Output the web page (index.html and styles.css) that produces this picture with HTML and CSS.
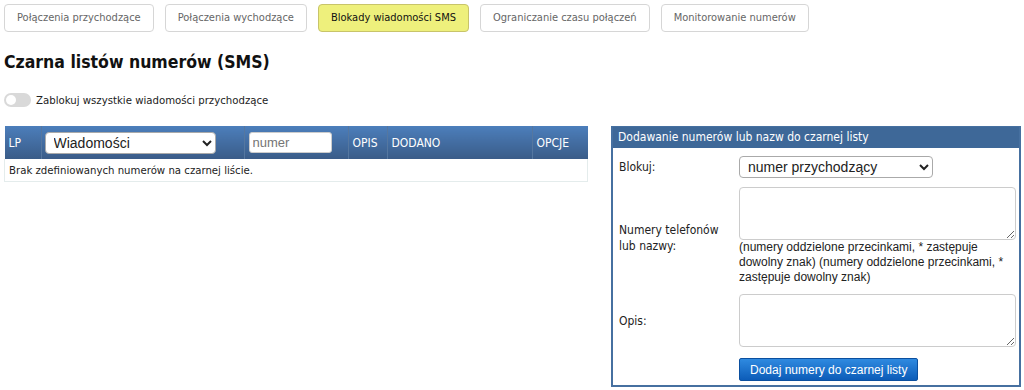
FILE: index.html
```html
<!DOCTYPE html>
<html lang="pl">
<head>
  <meta charset="UTF-8" />
  <title>Blokady wiadomości SMS</title>
  <link rel="stylesheet" href="styles.css">
</head>
<body>

  <!-- Tabs -->
  <div class="tabs">
    <a class="tab">Połączenia przychodzące</a>
    <a class="tab">Połączenia wychodzące</a>
    <a class="tab active">Blokady wiadomości SMS</a>
    <a class="tab">Ograniczanie czasu połączeń</a>
    <a class="tab">Monitorowanie numerów</a>
  </div>

  <h1>Czarna listów numerów (SMS)</h1>

  <div class="toggle-row">
    <span class="toggle"><span class="knob"></span></span>
    <span>Zablokuj wszystkie wiadomości przychodzące</span>
  </div>

  <div class="content">
    <!-- Blacklist table -->
    <table class="list">
      <thead>
        <tr>
          <th class="c-lp">LP</th>
          <th class="c-type">
            <select class="sel">
              <option>Wiadomości</option>
            </select>
          </th>
          <th class="c-num"><input type="text" class="num" placeholder="numer" /></th>
          <th class="c-opis">OPIS</th>
          <th class="c-date">DODANO</th>
          <th class="c-opt">OPCJE</th>
        </tr>
      </thead>
      <tbody>
        <tr>
          <td colspan="6">Brak zdefiniowanych numerów na czarnej liście.</td>
        </tr>
      </tbody>
    </table>

    <!-- Add form -->
    <div class="panel">
      <div class="panel-head">Dodawanie numerów lub nazw do czarnej listy</div>
      <div class="form">
        <label class="lbl">Blokuj:</label>
        <div>
          <select class="sel block-sel">
            <option>numer przychodzący</option>
          </select>
        </div>

        <label class="lbl lbl-two">Numery telefonów<br/>lub nazwy:</label>
        <div>
          <textarea class="area"></textarea>
          <div class="hint">(numery oddzielone przecinkami, * zastępuje dowolny znak) (numery oddzielone przecinkami, * zastępuje dowolny znak)</div>
        </div>

        <label class="lbl">Opis:</label>
        <div>
          <textarea class="area"></textarea>
        </div>

        <div></div>
        <div><button class="btn">Dodaj numery do czarnej listy</button></div>
      </div>
    </div>
  </div>

</body>
</html>
```

FILE: styles.css
```css
body {
  margin: 0;
  font-family: "DejaVu Sans Condensed", "DejaVu Sans", sans-serif;
  font-size: 12px;
  color: #222;
  background: #fff;
}
.tabs {
  display: flex;
  gap: 11px;
  padding: 4px 4px 0;
}
.tab {
  display: block;
  height: 26px;
  line-height: 26px;
  padding: 0 12px;
  font-size: 11px;
  border: 1px solid #d6d6d6;
  border-radius: 4px;
  color: #666;
  background: #fff;
}
.tab.active {
  background: #eef07c;
  border-color: #c8c46a;
  color: #111;
}
h1 {
  font-size: 17.5px;
  font-weight: bold;
  margin: 20px 0 0 4px;
  color: #111;
}
.toggle-row {
  display: flex;
  align-items: center;
  gap: 5px;
  margin: 21px 0 0 4px;
  font-size: 11.3px;
  color: #222;
}
.toggle {
  flex: none;
  width: 27px;
  height: 14px;
  border-radius: 7px;
  background: #d9d9d9;
  position: relative;
}
.knob {
  position: absolute;
  left: 2px;
  top: 2px;
  width: 10px;
  height: 10px;
  border-radius: 50%;
  background: #fff;
}
.content {
  display: flex;
  align-items: flex-start;
  margin: 19px 0 0 4px;
}
.list {
  width: 584px;
  border-collapse: collapse;
}
.list th {
  background: linear-gradient(#4c7ebb, #3a5c88);
  color: #fff;
  font-weight: normal;
  text-align: left;
  height: 33px;
  padding: 0 4px;
  border-left: 1px solid #5577a0;
}
.list th:first-child {
  border-left: none;
}
.c-lp { width: 28px; }
.c-type { width: 194px; }
.c-num { width: 95px; }
.c-opis { width: 30px; }
.c-date { width: 136px; }
.list td {
  padding: 4px 4px;
  height: 14px;
  font-size: 11.3px;
  border: 1px solid #e4ecec;
  border-top: none;
}
.sel {
  font-family: "Liberation Sans", Arial, sans-serif;
  font-size: 14px;
  color: #222;
  background: #fff;
  border: 1px solid #aaa;
  border-radius: 4px;
  height: 22px;
  padding: 0 4px;
}
.c-type .sel {
  width: 171px;
  margin-left: -1px;
}
.num {
  width: 83px;
  height: 21px;
  box-sizing: border-box;
  border: 1px solid #ccc;
  border-radius: 3px;
  font-family: "Liberation Sans", Arial, sans-serif;
  font-size: 13px;
  padding: 0 3px;
}
.panel {
  width: 406px;
  margin-left: 23px;
  border: 2px solid #4670a0;
  border-top: 1px solid #4670a0;
}
.panel-head {
  background: #3e6898;
  color: #fff;
  height: 21px;
  line-height: 21px;
  padding: 0 5px;
}
.form {
  display: grid;
  grid-template-columns: 122px 1fr;
  align-items: center;
  row-gap: 9px;
  padding: 8px 3px 4px 4px;
}
.lbl {
  color: #222;
  padding-left: 2px;
}
.lbl-two {
  line-height: 16px;
  padding-top: 4px;
}
.block-sel {
  width: 194px;
  height: 22px;
}
.area {
  display: block;
  width: 277px;
  height: 53px;
  box-sizing: border-box;
  border: 1px solid #ccc;
  border-radius: 4px;
  resize: vertical;
}
.hint {
  font-family: "Liberation Sans", Arial, sans-serif;
  font-size: 12px;
  line-height: 15px;
  color: #222;
}
.btn {
  font-family: "Liberation Sans", Arial, sans-serif;
  font-size: 12px;
  color: #fff;
  background: linear-gradient(#2f8ae0, #0c5cb8);
  border: 1px solid #0b4f9f;
  border-radius: 2px;
  height: 23px;
  padding: 0 10px;
  margin-top: 2px;
}
```
